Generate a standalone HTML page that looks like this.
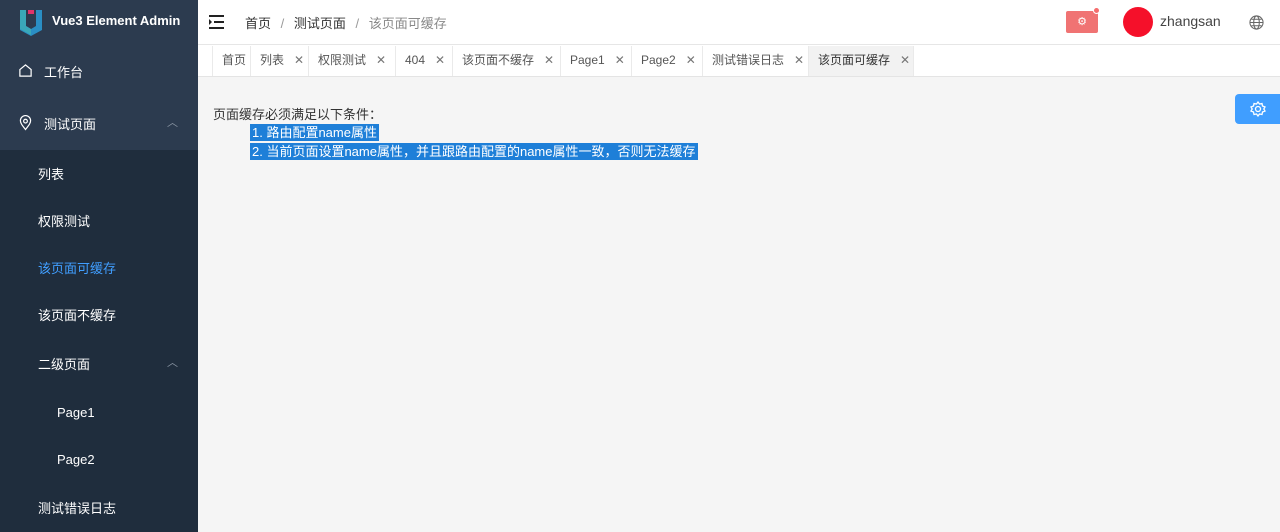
<!DOCTYPE html>
<html><head><meta charset="utf-8"><style>
*{margin:0;padding:0;box-sizing:border-box}
body{width:1280px;height:532px;overflow:hidden;font-family:"Liberation Sans","Noto Sans CJK SC",sans-serif;font-size:13px;background:#f5f5f5;position:relative}
.side{position:absolute;left:0;top:0;width:198px;height:532px;background:#2c3b4f}
.sub{position:absolute;left:0;top:150px;width:198px;height:382px;background:#1f2d3d}
.mi{position:absolute;color:#fff;font-size:13px;white-space:nowrap}
.hdr{position:absolute;left:198px;top:0;width:1082px;height:45px;background:#fff;border-bottom:1px solid #e6e6e6}
.tags{position:absolute;left:198px;top:45px;width:1082px;height:32px;background:#fff;border-bottom:1px solid #e4e4e4}
.tag{position:absolute;top:1px;height:30px;line-height:28px;font-size:12px;color:#555;border-left:1px solid #eaeaea;padding-left:9px;white-space:nowrap}
.tag i{font-style:normal;margin-left:10px;color:#777}
.sel{background:#1e7fd8;color:#fff}
</style></head><body>
<div class="side">
<svg style="position:absolute;left:19px;top:8px" width="24" height="28" viewBox="0 0 24 28"><path d="M1 2 L7 2 L7 18 L12 21 L17 18 L17 2 L23 2 L23 22 L12 28 L1 22Z" fill="#2a8ec4"/><path d="M7 2 L7 18 L12 21 L12 27 L1 21 L1 2Z" fill="#3aa8b8"/><rect x="9" y="2" width="6" height="4" fill="#e0336b"/></svg>
<div class="mi" style="left:52px;top:13px;font-weight:bold;font-size:13px">Vue3 Element Admin</div>
<svg style="position:absolute;left:18px;top:63px" width="15" height="15" viewBox="0 0 16 16" fill="none" stroke="#fff" stroke-width="1.3"><path d="M2 7 L8 2 L14 7 V14 H2Z"/></svg>
<div class="mi" style="left:44px;top:62px">工作台</div>
<svg style="position:absolute;left:19px;top:115px" width="13" height="16" viewBox="0 0 14 16" fill="none" stroke="#fff" stroke-width="1.3"><path d="M7 15 C3 10 1.5 8 1.5 5.5 A5.5 5.5 0 0 1 12.5 5.5 C12.5 8 11 10 7 15Z"/><circle cx="7" cy="6" r="2"/></svg>
<div class="mi" style="left:44px;top:114px">测试页面</div>
<div class="mi" style="left:167px;top:114px;color:#8a95a3;font-size:11px">︿</div>
<div class="sub"></div>
<div class="mi" style="left:38px;top:164px">列表</div>
<div class="mi" style="left:38px;top:211px">权限测试</div>
<div class="mi" style="left:38px;top:258px;color:#409eff">该页面可缓存</div>
<div class="mi" style="left:38px;top:305px">该页面不缓存</div>
<div class="mi" style="left:38px;top:354px">二级页面</div>
<div class="mi" style="left:167px;top:354px;color:#8a95a3;font-size:11px">︿</div>
<div class="mi" style="left:57px;top:405px">Page1</div>
<div class="mi" style="left:57px;top:452px">Page2</div>
<div class="mi" style="left:38px;top:498px">测试错误日志</div>
</div>
<div class="hdr">
<svg style="position:absolute;left:11px;top:15px" width="15" height="14" viewBox="0 0 15 14" fill="#222"><rect x="0" y="0" width="15" height="2"/><rect x="5" y="6" width="10" height="2"/><rect x="0" y="12" width="15" height="2"/><path d="M0 4 L3 7 L0 10Z"/></svg>
<div style="position:absolute;left:47px;top:13px;color:#333;white-space:nowrap">首页 <span style="color:#999;margin:0 6px">/</span> 测试页面 <span style="color:#999;margin:0 6px">/</span> <span style="color:#888">该页面可缓存</span></div>
<div style="position:absolute;left:868px;top:11px;width:32px;height:22px;background:#f07373;border-radius:2px;color:#fff;font-size:11px;text-align:center;line-height:22px">⚙</div>
<div style="position:absolute;left:895px;top:7px;width:7px;height:7px;border-radius:50%;background:#f56c6c;border:1px solid #fff"></div>
<div style="position:absolute;left:925px;top:7px;width:30px;height:30px;border-radius:50%;background:#f5102a"></div>
<div style="position:absolute;left:962px;top:13px;color:#444;font-size:14px">zhangsan</div>
<svg style="position:absolute;left:1051px;top:15px" width="15" height="15" viewBox="0 0 16 16" fill="none" stroke="#666" stroke-width="1.1"><circle cx="8" cy="8" r="7"/><ellipse cx="8" cy="8" rx="3" ry="7"/><path d="M1 8H15M2.5 4.5H13.5M2.5 11.5H13.5"/></svg>
</div>
<div class="tags">
<div class="tag" style="left:14px;width:38px">首页</div>
<div class="tag" style="left:52px;width:58px">列表<i>✕</i></div>
<div class="tag" style="left:110px;width:87px">权限测试<i>✕</i></div>
<div class="tag" style="left:197px;width:57px">404<i>✕</i></div>
<div class="tag" style="left:254px;width:108px">该页面不缓存<i>✕</i></div>
<div class="tag" style="left:362px;width:71px">Page1<i>✕</i></div>
<div class="tag" style="left:433px;width:71px">Page2<i>✕</i></div>
<div class="tag" style="left:504px;width:106px">测试错误日志<i>✕</i></div>
<div class="tag" style="left:610px;width:106px;background:#f2f2f2;color:#333;border-right:1px solid #eaeaea">该页面可缓存<i>✕</i></div>
</div>
<div style="position:absolute;left:1235px;top:94px;width:45px;height:30px;background:#409eff;border-radius:4px 0 0 4px"></div>
<svg style="position:absolute;left:1250px;top:101px" width="16" height="16" viewBox="0 0 16 16" fill="none" stroke="#fff" stroke-width="1.3"><circle cx="8" cy="8" r="2.5"/><path d="M8 1 L9.5 3 L12 2.5 L12.5 5 L15 6 L13.8 8 L15 10 L12.5 11 L12 13.5 L9.5 13 L8 15 L6.5 13 L4 13.5 L3.5 11 L1 10 L2.2 8 L1 6 L3.5 5 L4 2.5 L6.5 3Z"/></svg>
<div style="position:absolute;left:213px;top:104px;color:#333;white-space:nowrap">页面缓存必须满足以下条件：</div>
<div style="position:absolute;left:250px;top:122px;white-space:nowrap"><span class="sel" style="padding:1px 2px">1. 路由配置name属性</span></div>
<div style="position:absolute;left:250px;top:141px;white-space:nowrap"><span class="sel" style="padding:1px 2px">2. 当前页面设置name属性，并且跟路由配置的name属性一致，否则无法缓存</span></div>
</body></html>
